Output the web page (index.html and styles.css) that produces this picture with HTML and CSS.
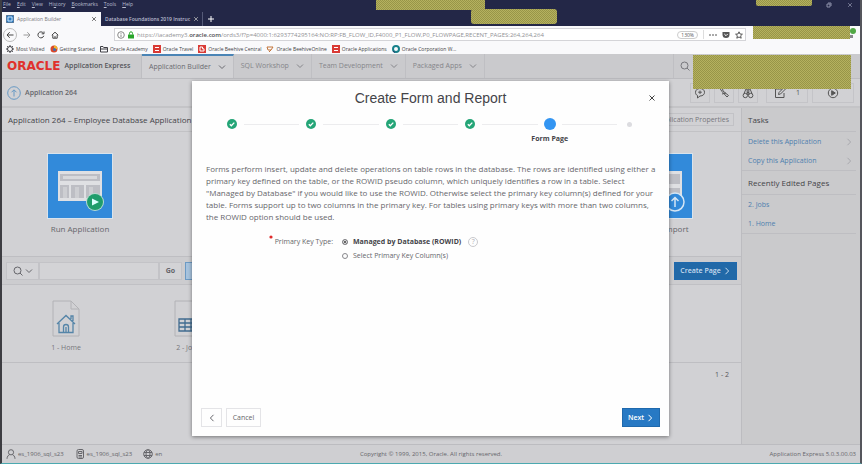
FILE: index.html
```html
<!DOCTYPE html>
<html lang="en">
<head>
<meta charset="utf-8">
<title>Application Builder</title>
<link rel="stylesheet" href="styles.css">
</head>
<body>
<svg width="0" height="0" class="defs" aria-hidden="true">
  <symbol id="chev-down" viewBox="0 0 8 8"><path d="M1 2.5 4 5.5 7 2.5"/></symbol>
  <symbol id="chev-right" viewBox="0 0 8 8"><path d="M2.5 .8 5.6 4 2.5 7.2"/></symbol>
  <symbol id="chev-left" viewBox="0 0 8 8"><path d="M5.5 .8 2.4 4 5.5 7.2"/></symbol>
  <symbol id="close" viewBox="0 0 8 8"><path d="M1.5 1.5l5 5M6.500 1.500l-5 5"/></symbol>
  <symbol id="search" viewBox="0 0 10 10"><circle cx="4.500" cy="4.500" r="3.500"/><path d="M7 7l2.500 2.500"/></symbol>
  <symbol id="arrow-up" viewBox="0 0 14 14"><circle cx="7" cy="7" r="6.300"/><path d="M7 10.500V4M4.500 6.300 7 3.800l2.500 2.500"/></symbol>
</svg>
<div class="window">
  <header class="titlebar">
    <nav class="menus"><span><u>F</u>ile</span><span><u>E</u>dit</span><span><u>V</u>iew</span><span>Hi<u>s</u>tory</span><span><u>B</u>ookmarks</span><span><u>T</u>ools</span><span><u>H</u>elp</span></nav>
    <div class="tabs">
      <div class="tab active"><svg class="i8" viewBox="0 0 8 8"><rect width="8" height="8" rx="1" fill="#2c7cc4"/><path d="M2 6V2h4v4z" fill="none" stroke="#cfe4f6"/></svg><span>Application Builder</span><button aria-label="Close tab"><svg class="i6"><use href="#close"/></svg></button></div>
      <div class="tab"><span>Database Foundations 2019 Instruc</span><button aria-label="Close tab"><svg class="i6"><use href="#close"/></svg></button></div>
      <button class="newtab" aria-label="New tab"><svg class="i8" viewBox="0 0 8 8"><path d="M4 1v6M1 4h6"/></svg></button>
    </div>
    <div class="wincontrols"><svg class="i6" viewBox="0 0 6 6"><path d="M1 2h3v3H1zM2 1h3v3"/></svg><svg class="i6"><use href="#close"/></svg></div>
  </header>
  <div class="toolbar">
    <button class="back" aria-label="Back"><svg class="i8" viewBox="0 0 8 8"><path d="M7.500 4H1M3.700 1.200 1 4l2.700 2.800"/></svg></button>
    <button aria-label="Forward"><svg class="i8 pale" viewBox="0 0 8 8"><path d="M.5 4H7M4.300 1.200 7 4 4.300 6.800"/></svg></button>
    <button aria-label="Reload"><svg class="i8" viewBox="0 0 8 8"><path d="M6.800 4.800A3 3 0 1 1 6.300 2M7 .5v2.300H4.700"/></svg></button>
    <button aria-label="Home page"><svg class="i8" viewBox="0 0 8 8"><path d="M.8 4.200 4 1.200l3.200 3M1.800 4v3.200h4.400V4M4 7V5"/></svg></button>
    <div class="urlbar">
      <svg class="i8 grey" viewBox="0 0 8 8"><circle cx="4" cy="4" r="3.300"/><path d="M4 3.500V6M4 2v.8"/></svg>
      <svg class="i8" viewBox="0 0 8 8"><rect x="1" y="3.500" width="6" height="4" fill="#2aa52a" stroke="none"/><path d="M2.500 3.500V2.300a1.500 1.500 0 0 1 3 0v1.200" stroke="#2aa52a"/></svg>
      <div class="url">https://iacademy3.<b>oracle.com</b>/ords3/f?p=4000:1:6293774295164:NO:RP:FB_FLOW_ID,F4000_P1_FLOW,P0_FLOWPAGE,RECENT_PAGES:264,264,264</div>
      <div class="urltools">
      <span class="zoom">130%</span><span class="rule"></span>
      <svg class="i8" viewBox="0 0 8 8"><path d="M0 4h2M3 4h2M6 4h2"/></svg>
      <svg class="i8" viewBox="0 0 8 8"><path d="M.5 1h7v2.500a3.500 3.500 0 0 1-7 0z" fill="#555" stroke="none"/><path d="M2.300 3 4 4.700 5.700 3" stroke="#fff"/></svg>
      <svg class="i8" viewBox="0 0 8 8"><path d="M4 .8l1 2.200 2.400.2-1.800 1.600.6 2.400L4 6 1.800 7.200l.6-2.400L.6 3.200 3 3z"/></svg>
      </div>
    </div>
    <span class="appmenu"><i></i></span>
  </div>
  <nav class="bookmarks">
    <a href="#"><svg class="i8" viewBox="0 0 8 8"><circle cx="4" cy="4" r="2.500"/><path d="M4 0v1.500M4 6.500V8M0 4h1.500M6.500 4H8M1.200 1.200l1 1M5.800 5.800l1 1M6.800 1.200l-1 1M2.200 5.800l-1 1"/></svg>Most Visited</a>
    <a href="#"><svg class="i8" viewBox="0 0 8 8"><circle cx="4" cy="4" r="3.500" fill="#d9482b" stroke="none"/><path d="M4 .5a3.500 3.500 0 0 1 3.500 3.500H4z" fill="#f0b429" stroke="none"/><circle cx="4.500" cy="4.500" r="1.500" fill="#3b6fb5" stroke="none"/></svg>Getting Started</a>
    <a href="#"><svg class="i8" viewBox="0 0 8 8"><path d="M.5 7V1.500h2.500l.7 1h3.800V7zM.5 4h7"/></svg>Oracle Academy</a>
    <a href="#"><svg class="i8" viewBox="0 0 8 8"><rect width="8" height="8" fill="#d93a35" stroke="none"/><path d="M2 2.500h4M2 5.500h4" stroke="#fff"/></svg>Oracle Travel</a>
    <a href="#"><svg class="i8" viewBox="0 0 8 8"><rect width="8" height="8" fill="#d93a35" stroke="none"/><path d="M2 6V2h2.500v1.800H6V6z" stroke="#fff"/></svg>Oracle Beehive Central</a>
    <a href="#"><svg class="i8" viewBox="0 0 8 8"><path d="M1 2h6L5 5H2zM3 7l2-2" stroke="#c2743a"/></svg>Oracle BeehiveOnline</a>
    <a href="#"><svg class="i8" viewBox="0 0 8 8"><rect width="8" height="8" fill="#d93a35" stroke="none"/><path d="M2 2.500h4M2 5.500h4" stroke="#fff"/></svg>Oracle Applications</a>
    <a href="#"><svg class="i8" viewBox="0 0 8 8"><circle cx="4" cy="4" r="3" stroke="#17808a" stroke-width="2"/><path d="M1 6l2 1.500" stroke="#223b6b"/></svg>Oracle Corporation W...</a>
  </nav>

  <div class="app">
    <header class="appbar">
      <div class="brand"><b>ORACLE</b><span>Application Express</span></div>
      <nav class="apptabs">
        <a href="#" class="on">Application Builder<svg class="i8"><use href="#chev-down"/></svg></a>
        <a href="#">SQL Workshop<svg class="i8"><use href="#chev-down"/></svg></a>
        <a href="#">Team Development<svg class="i8"><use href="#chev-down"/></svg></a>
        <a href="#">Packaged Apps<svg class="i8"><use href="#chev-down"/></svg></a>
      </nav>
      <div class="appsearch"><svg class="i10"><use href="#search"/></svg></div>
    </header>
    <div class="crumbs">
      <svg class="i14 blue"><use href="#arrow-up"/></svg><span>Application 264</span>
      <div class="tools">
        <button aria-label="Comments"><svg class="i12" viewBox="0 0 12 12"><path d="M6 1.500c3 0 4.500 1.800 4.500 3.800S9 9 6 9L3.500 11V8.500C2 8 1.500 6.500 1.500 5.300 1.500 3.300 3 1.500 6 1.500zM6 3.500v3.500M4.200 5.200h3.600"/></svg></button>
        <button aria-label="Utilities"><svg class="i12" viewBox="0 0 12 12"><path d="M2 1.500l2 3 5 5.500 1.500-1.500L5 4 4.500 1.500M4 7l4-1"/></svg></button>
        <button aria-label="Find"><svg class="i12" viewBox="0 0 12 12"><circle cx="3.300" cy="8.500" r="2.200"/><circle cx="8.700" cy="8.500" r="2.200"/><path d="M2 6.500 4 2h1.200v6M10 6.500 8 2H6.800v6M5 5.500h2"/></svg></button>
        <button class="edit" aria-label="Edit page 1"><svg class="i12" viewBox="0 0 12 12"><path d="M8 2H1.500v8.500H10V6M4.500 7.500l.5-2 5-5 1.500 1.500-5 5z"/></svg><span>1</span></button>
        <button class="run" aria-label="Run page"><svg class="i12" viewBox="0 0 12 12"><circle cx="6" cy="6" r="4.700"/><path d="M4.700 3.700 8.300 6 4.700 8.300z" fill="#555"/></svg></button>
      </div>
    </div>
    <div class="columns">
      <main class="main">
        <div class="region-title"><h1>Application 264 – Employee Database Application</h1><button>Edit Application Properties</button></div>
        <div class="tiles">
          <a href="#" class="tile"><svg viewBox="0 0 64 64"><rect width="64" height="64" fill="#328ada"/><rect x="10" y="17" width="44" height="30" fill="#dfe0e3"/><path d="M12 20h40v7H12zM12 31h9v13h-9zM23 31h13v13H23zM38 31h14v13H38z" fill="#bdbec4"/><path d="M15 23.500h34" stroke="#d8d9dc" stroke-width="3"/><path d="M17 33v11M29 33v11M43 33v11" stroke="#cdced2" stroke-width="4"/><circle cx="47" cy="48" r="9" fill="#b6ddd0"/><circle cx="47" cy="48" r="8" fill="#1f9d6c"/><path d="M44 44.500 51 48l-7 3.500z" fill="#dff"/></svg><span>Run Application</span></a>
          <a href="#" class="tile"><svg viewBox="0 0 64 64"><rect width="64" height="64" fill="#328ada"/><rect x="10" y="17" width="44" height="30" fill="#dfe0e3"/><path d="M12 20h40v10H12zM12 34h40v10H12z" fill="#bdbec4"/><circle cx="47" cy="48" r="9" fill="#328ada" stroke="#d5e6f5" stroke-width="1.500"/><path d="M47 53V43.500M43.500 47l3.500-3.500 3.500 3.500" fill="none" stroke="#d5e6f5" stroke-width="1.500"/></svg><span>Export / Import</span></a>
        </div>
        <form class="finder">
          <button type="button" class="kind" aria-label="Search columns"><svg class="i10"><use href="#search"/></svg><svg class="i8"><use href="#chev-down"/></svg></button><input type="text" aria-label="Search pages"><button type="button" class="go">Go</button>
          <button type="button" class="view" aria-label="Icon view"></button>
          <button type="button" class="primary create">Create Page <svg class="i8"><use href="#chev-right"/></svg></button>
        </form>
        <div class="pages">
          <a href="#"><svg viewBox="0 0 28 37"><path d="M1 1h18l8 8v27H1zM19 1v8h8" stroke="#b2b2b6"/><path d="M5 24 14 15.500 23 24M7 23v9.500h14V23M11.500 32.500V27a2.500 2.500 0 0 1 5 0v5.500M14 27v5M19 19v-3h2v5" stroke="#5585a8" stroke-width="1.300"/></svg><span>1 - Home</span></a>
          <a href="#"><svg viewBox="0 0 28 37"><path d="M1 1h18l8 8v27H1zM19 1v8h8" stroke="#b2b2b6"/><path d="M5 19h18v12H5zM5 23h18M5 27h18M11 19v12M17 19v12" stroke="#416c90" stroke-width="1.300"/></svg><span>2 - Jobs</span></a>
        </div>
        <div class="pager">1 - 2</div>
      </main>
      <aside class="side">
        <h2>Tasks</h2>
        <ul><li><a href="#">Delete this Application</a><svg class="i8"><use href="#chev-right"/></svg></li><li><a href="#">Copy this Application</a><svg class="i8"><use href="#chev-right"/></svg></li></ul>
        <h2>Recently Edited Pages</h2>
        <ul><li><a href="#">2. Jobs</a></li><li><a href="#">1. Home</a></li></ul>
      </aside>
    </div>
    <footer class="foot">
      <div><svg class="i10" viewBox="0 0 10 10"><circle cx="5" cy="3.300" r="2.600"/><path d="M1 9.800C1 7.500 2.500 6 3.500 5.700M9 9.800C9 7.500 7.500 6 6.500 5.700"/></svg><span>es_1906_sql_s23</span><svg class="i10" viewBox="0 0 10 10"><rect x="2" y=".5" width="6.500" height="9" rx="1.500"/><path d="M3.500 2.500h3.500v2H3.500zM3.500 6.500h3.500M3.500 8h3.500"/></svg><span>es_1906_sql_s23</span><svg class="i10" viewBox="0 0 10 10"><circle cx="5" cy="5" r="4.300"/><ellipse cx="5" cy="5" rx="2" ry="4.300"/><path d="M1 3.500h8M1 6.500h8"/></svg><span>en</span></div>
      <div>Copyright © 1999, 2015, Oracle. All rights reserved.</div>
      <div>Application Express 5.0.3.00.03</div>
    </footer>
  </div>
</div>

<section class="dialog" role="dialog" aria-labelledby="dlg-title">
  <header><h2 id="dlg-title">Create Form and Report</h2><button aria-label="Close"><svg class="i8"><use href="#close"/></svg></button></header>
  <ol class="steps">
    <li><svg viewBox="0 0 10 10"><circle cx="5" cy="5" r="5"/><path d="M2.800 5.200 4.300 6.700 7.300 3.600"/></svg></li>
    <li><svg viewBox="0 0 10 10"><circle cx="5" cy="5" r="5"/><path d="M2.800 5.200 4.300 6.700 7.300 3.600"/></svg></li>
    <li><svg viewBox="0 0 10 10"><circle cx="5" cy="5" r="5"/><path d="M2.800 5.200 4.300 6.700 7.300 3.600"/></svg></li>
    <li><svg viewBox="0 0 10 10"><circle cx="5" cy="5" r="5"/><path d="M2.800 5.200 4.300 6.700 7.300 3.600"/></svg></li>
    <li class="now"><i></i><span>Form Page</span></li>
    <li class="next"><i></i></li>
  </ol>
  <div class="dlg-body">
    <p>Forms perform insert, update and delete operations on table rows in the database. The rows are identified using either a<br>primary key defined on the table, or the ROWID pseudo column, which uniquely identifies a row in a table. Select<br>"Managed by Database" if you would like to use the ROWID. Otherwise select the primary key column(s) defined for your<br>table. Forms support up to two columns in the primary key. For tables using primary keys with more than two columns,<br>the ROWID option should be used.</p>
    <div class="field" role="radiogroup" aria-labelledby="pk-label">
      <div class="flabel"><svg class="req" viewBox="0 0 4 4" role="img" aria-label="required"><circle cx="2" cy="2" r="1.600"/></svg><span id="pk-label">Primary Key Type:</span></div>
      <div class="opts">
        <div><input type="radio" name="pk" id="pk1" checked><label for="pk1">Managed by Database (ROWID)</label><button type="button" class="help" aria-label="Help">?</button></div>
        <div><input type="radio" name="pk" id="pk2"><label for="pk2">Select Primary Key Column(s)</label></div>
      </div>
    </div>
  </div>
  <footer><button aria-label="Previous"><svg class="i8"><use href="#chev-left"/></svg></button><button>Cancel</button><button class="primary">Next <svg class="i8"><use href="#chev-right"/></svg></button></footer>
</section>
<div class="mask m1"></div><div class="mask m2"></div><div class="mask m3"></div><div class="mask m4"></div><div class="mask m5"></div>
</body>
</html>
```
FILE: styles.css
```css
* { box-sizing: border-box; }
body { margin: 0; font: 7px/10px "Open Sans", "Noto Sans", sans-serif; color: #55555a; }
button, input { font: inherit; color: inherit; margin: 0; padding: 0; border: 0; background: none; }
button { display: flex; align-items: center; justify-content: center; }
a { color: inherit; text-decoration: none; }
h1, h2, p, ul, ol { margin: 0; padding: 0; font-weight: 400; list-style: none; }
svg { fill: none; stroke: currentColor; flex: none; display: block; }
.tile svg { stroke: none; }
.defs { position: absolute; }
.i6 { width: 6px; height: 6px; }
.i8 { width: 8px; height: 8px; }
.i10 { width: 10px; height: 10px; }
.i12 { width: 12px; height: 12px; }
.i14 { width: 14px; height: 14px; }
.window { min-height: 100vh; display: flex; flex-direction: column; border-left: 2px solid #3d3d42; border-right: 2px solid #55565c; border-bottom: 1px solid #4ba9b0; }

.titlebar { background: #232747; color: #c3c6d6; height: 26px; position: relative; display: flex; flex-direction: column; justify-content: space-between; }
.menus { display: flex; gap: 6px; padding-left: 1px; font-size: 5px; line-height: 8px; color: #b9bdd0; }
.tabs { display: flex; height: 14px; }
.tab { display: flex; align-items: center; gap: 3px; padding: 0 4px; width: 101px; color: #b9bdd0; font-weight: 600; font-size: 5px; white-space: nowrap; }
.tab span { flex: 1; }
.tab.active { background: #f9f9fb; color: #77777c; width: 99px; }
.tab.active span { font-weight: 400; }
.tab button { color: #bbb; }
.tab.active button { color: #444; }
.newtab { border-left: 1px solid #555a78; width: 16px; color: #fff; }
.wincontrols { position: absolute; right: 7px; top: 2px; display: flex; gap: 15px; color: #8d91aa; }

.toolbar { background: #f9f9fb; height: 17px; display: flex; align-items: center; gap: 6px; padding: 0 4px 0 1px; color: #444; }
.toolbar .back { width: 14px; height: 14px; border: 1px solid #bbb; border-radius: 50%; }
.pale { color: #999; }
.grey { color: #888; }
.urlbar { flex: 1; min-width: 0; height: 13px; margin: 0 110px 0 49px; border: 1px solid #d4d4d8; background: #fff; display: flex; align-items: center; gap: 2px; padding: 0 2px; color: #555; }
.url { flex: 1; font-size: 6px; color: #909094; white-space: nowrap; overflow: hidden; }
.url b { font-weight: 600; color: #4c4c50; }
.urltools { display: flex; align-items: center; gap: 5px; }
.zoom { border: 1px solid #ccc; border-radius: 4px; padding: 0 3px; font-size: 5px; line-height: 6px; }
.rule { width: 1px; height: 9px; background: #ddd; }
.appmenu { position: absolute; right: 9px; top: 35px; width: 4px; height: 3px; background: #88888c; }
.appmenu i { position: absolute; right: -3px; top: -7px; width: 6px; height: 6px; border-radius: 50%; background: #51a845; }
.bookmarks { background: #f9f9fb; height: 11px; display: flex; align-items: center; gap: 5px; padding-left: 4px; font-size: 5px; color: #3f3f44; white-space: nowrap; }
.bookmarks a { display: flex; align-items: center; gap: 2px; }

.app { flex: 1; display: flex; flex-direction: column; background: #d1d1d4; }
.appbar { height: 25px; background: #cacacd; display: flex; align-items: stretch; border-bottom: 1px solid #bcbcc0; }
.brand { width: 140px; display: flex; align-items: center; gap: 4px; padding-left: 5px; color: #55555a; font-weight: 600; white-space: nowrap; border-right: 1px solid #bebec2; }
.brand b { color: #e0312c; font: 700 12px/12px "DejaVu Sans", sans-serif; }
.apptabs { display: flex; flex: 1; color: #85858a; }
.apptabs a { display: flex; align-items: center; justify-content: center; gap: 7px; padding: 0 7px; border-right: 1px solid #bfbfc3; }
.apptabs .on { background: #d1d1d4; border-top: 2px solid #4a84b5; color: #6a6a70; }
.appsearch { width: 187px; border-left: 1px solid #bfbfc3; display: flex; align-items: center; padding-left: 6px; color: #77777c; }
.crumbs { height: 29px; display: flex; align-items: center; gap: 4px; padding: 0 6px 0 5px; border-bottom: 2px solid #c4c4c7; font-weight: 600; color: #66666b; }
.blue { color: #6799c4; }
.tools { margin-left: auto; display: flex; gap: 4px; color: #555; font-weight: 400; }
.tools button { width: 20px; height: 20px; border: 1px solid #c4c4c8; gap: 10px; }
.tools .edit { margin-left: 4px; width: 42px; }
.tools .run { width: 42px; }
.columns { flex: 1; display: flex; }
.main { flex: 1; min-width: 0; display: flex; flex-direction: column; }
.region-title { height: 24px; border-bottom: 1px solid #c2c2c5; display: flex; align-items: center; justify-content: space-between; padding: 0 7px 0 6px; }
h1, .side h2 { font-size: 8px; color: #444449; }
.region-title button { height: 13px; padding: 0 4px; border: 1px solid #c2c2c6; color: #77777c; }
.tiles { height: 124px; display: flex; justify-content: space-between; padding: 22px 45px 0 42px; }
.tile { width: 72px; display: flex; flex-direction: column; align-items: center; gap: 6px; font-size: 8px; color: #66666b; white-space: nowrap; }
.tile svg { width: 64px; height: 64px; outline: 1px solid #d9e3ec; }
.finder { height: 29px; border-top: 1px solid #bebec2; border-bottom: 1px solid #c0c0c4; background: #cccccf; display: flex; align-items: center; padding: 0 4px; color: #66666b; }
.finder button, .finder input { height: 18px; background: #d3d3d6; border: 1px solid #c3c3c7; }
.finder .kind { width: 33px; gap: 2px; }
.finder input { width: 120px; }
.finder .go { width: 23px; font-weight: 700; }
.finder .view { width: 40px; margin-left: 3px; background: #a7c3de; border-color: #6c9ac4; }
.primary, .finder .create { background: #2779c4; border: 1px solid #1f69ad; color: #fff; font-weight: 600; gap: 2px; }
.finder .create { margin-left: auto; width: 63px; background: #2169a8; color: #c9dced; }
.pages { height: 78px; border-bottom: 1px solid #bebec2; display: flex; gap: 50px; padding: 15px 0 0 28px; color: #77777c; }
.pages a { width: 72px; display: flex; flex-direction: column; align-items: center; gap: 6px; }
.pages svg { width: 28px; height: 37px; }
.pager { align-self: flex-end; padding: 7px 12px 0 0; }
.side { width: 119px; border-left: 1px solid #bcbcc0; background: #cacacc; padding-right: 4px; }
.side h2 { height: 24px; line-height: 24px; padding-left: 6px; border-bottom: 1px solid #bebec2; }
.side ul { border-bottom: 1px solid #bebec2; }
.side li { height: 19px; display: flex; align-items: center; justify-content: space-between; padding: 0 3px 0 6px; color: #a8a8ad; }
.side li a { color: #4f80ae; }
.foot { height: 19px; border-top: 1px solid #bcbcc0; background: #cfcfd2; display: grid; grid-template-columns: 1fr auto 1fr; align-items: center; padding: 0 4px; font-size: 6px; color: #66666b; }
.foot div:first-child { display: flex; align-items: center; gap: 2px; }
.foot div:first-child span { margin-right: 9px; }
.foot div:last-child { text-align: right; }

.dialog { position: absolute; top: 81px; bottom: 28px; left: calc(50% - 239px); width: 477px; background: #fefefe; box-shadow: 0 1px 4px rgba(0,0,0,.45); display: flex; flex-direction: column; color: #66666b; }
.dialog header { height: 34px; display: grid; grid-template-columns: 34px 1fr 34px; align-items: center; }
.dialog header h2 { grid-column: 2; text-align: center; font: 14px/18px "Liberation Sans", sans-serif; color: #444449; }
.dialog header button { justify-self: center; color: #444; }
.steps { display: grid; grid-template-columns: repeat(6, 1fr); height: 43px; }
.steps li { display: flex; flex-direction: column; align-items: center; position: relative; height: 18px; justify-content: center; }
.steps li + li::before { content: ""; position: absolute; right: calc(50% + 12px); width: calc(100% - 24px); height: 1px; top: 9px; background: #ececee; }
.steps svg { width: 10px; height: 10px; fill: #24a577; stroke: none; }
.steps svg path { fill: none; stroke: #fff; stroke-width: 1.300; }
.steps i { width: 5px; height: 5px; border-radius: 50%; background: #dcdce0; }
.steps .now i { width: 12px; height: 12px; background: #3395f2; }
.steps .now span { position: absolute; top: 19px; font-weight: 700; color: #444449; white-space: nowrap; }
.dlg-body { flex: 1; padding: 5px 14px; white-space: nowrap; }
.dlg-body p { font-size: 8px; line-height: 12px; }
.field { margin-top: 12px; display: flex; gap: 9px; }
.flabel { width: 127px; display: flex; justify-content: flex-end; gap: 2px; line-height: 14px; }
.req { width: 4px; height: 4px; fill: #e02b2b; stroke: none; }
.opts div { display: flex; align-items: center; height: 14px; gap: 5px; }
.opts input { appearance: none; width: 6px; height: 6px; border: 1px solid #88888c; border-radius: 50%; }
.opts input:checked { background: #333; box-shadow: inset 0 0 0 1px #fff; }
.opts input:checked + label { font-weight: 700; color: #444449; }
.help { width: 10px; height: 10px; border: 1px solid #c9c9cd; border-radius: 50%; color: #b0b0b4; margin-left: 2px; line-height: 8px; }
.dialog footer { display: flex; gap: 4px; padding: 0 9px 9px; }
.dialog footer button { height: 19px; width: 35px; border: 1px solid #e4e4e7; }
.dialog footer button:first-child { width: 21px; }
.dialog footer .primary { margin-left: auto; width: 38px; border-color: #1f69ad; }

.mask { position: absolute; background: repeating-conic-gradient(#b5b15f 0 25%, #979548 0 50%) 0 0 / 2px 2px; }
.m1 { left: 376px; top: 0; width: 109px; height: 10px; }
.m2 { left: 471px; top: 9px; width: 86px; height: 15px; border-radius: 3px; }
.m3 { right: 50px; top: 0; width: 56px; height: 6px; border-radius: 0 0 2px 2px; }
.m4 { right: 12px; top: 26px; width: 97px; height: 13px; }
.m5 { right: 11px; top: 55px; width: 158px; height: 34px; }
```
